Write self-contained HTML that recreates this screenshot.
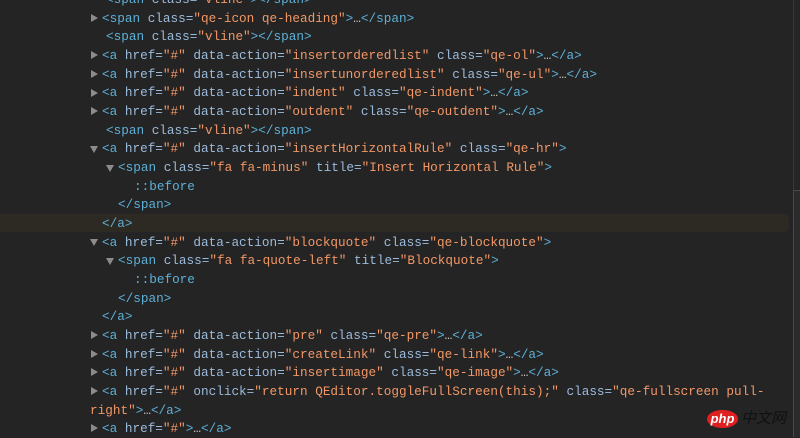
<!DOCTYPE html>
<html><head><meta charset="utf-8">
<style>
html,body{margin:0;padding:0;}
body{width:800px;height:436px;background:#242424;overflow:hidden;position:relative;font-family:"Liberation Mono","DejaVu Sans Mono",monospace;font-size:12.7px;}
.l{position:absolute;height:19px;line-height:19px;white-space:pre;color:#9bbbdc;}
.t{color:#5db0d7}
.v{color:#f29766}
.tri{position:absolute;width:0;height:0;}
.tr{border-top:4.5px solid transparent;border-bottom:4.5px solid transparent;border-left:7px solid #8c8c8c;}
.td{border-left:4.5px solid transparent;border-right:4.5px solid transparent;border-top:7px solid #8c8c8c;}
.hl{position:absolute;left:0;top:214px;width:789px;height:18px;background:#2d2923;border-radius:0 5px 5px 0;}
.sb{position:absolute;left:793px;top:0;width:7px;height:436px;background:#262626;border-left:1px solid #383838;}
.th{position:absolute;left:793px;top:190px;width:6px;height:246px;background:#2b2b2b;border-left:1px solid #4a4a4a;border-top:1px solid #4a4a4a;}
.pe{position:absolute;left:707px;top:410px;width:31px;height:18px;background:#e02020;border-radius:50%;color:#fff;font-family:"Liberation Sans",sans-serif;font-style:italic;font-weight:bold;font-size:13px;line-height:17px;text-align:center;}
.cn{position:absolute;left:741px;top:408px;font-family:"Noto Sans CJK SC",sans-serif;font-size:15px;color:#111;font-style:italic;line-height:20px;white-space:nowrap;}
</style></head><body>
<div class="hl"></div>
<div class="l" style="left:106px;top:-10px"><span class="t">&lt;span</span> class=<span class="v">"vline"</span><span class="t">&gt;&lt;/span&gt;</span></div>

<div class="tri tr" style="left:91px;top:14px"></div>
<div class="l" style="left:102px;top:8.6px"><span class="t">&lt;span</span> class=<span class="v">"qe-icon qe-heading"</span><span class="t">&gt;</span><span style="color:#ccc">…</span><span class="t">&lt;/span&gt;</span></div>
<div class="l" style="left:106px;top:27.3px"><span class="t">&lt;span</span> class=<span class="v">"vline"</span><span class="t">&gt;&lt;/span&gt;</span></div>

<div class="tri tr" style="left:91px;top:51px"></div>
<div class="l" style="left:102px;top:46px"><span class="t">&lt;a</span> href=<span class="v">"#"</span> data-action=<span class="v">"insertorderedlist"</span> class=<span class="v">"qe-ol"</span><span class="t">&gt;</span><span style="color:#ccc">…</span><span class="t">&lt;/a&gt;</span></div>
<div class="tri tr" style="left:91px;top:70px"></div>
<div class="l" style="left:102px;top:64.6px"><span class="t">&lt;a</span> href=<span class="v">"#"</span> data-action=<span class="v">"insertunorderedlist"</span> class=<span class="v">"qe-ul"</span><span class="t">&gt;</span><span style="color:#ccc">…</span><span class="t">&lt;/a&gt;</span></div>
<div class="tri tr" style="left:91px;top:89px"></div>
<div class="l" style="left:102px;top:83.3px"><span class="t">&lt;a</span> href=<span class="v">"#"</span> data-action=<span class="v">"indent"</span> class=<span class="v">"qe-indent"</span><span class="t">&gt;</span><span style="color:#ccc">…</span><span class="t">&lt;/a&gt;</span></div>
<div class="tri tr" style="left:91px;top:107px"></div>
<div class="l" style="left:102px;top:102px"><span class="t">&lt;a</span> href=<span class="v">"#"</span> data-action=<span class="v">"outdent"</span> class=<span class="v">"qe-outdent"</span><span class="t">&gt;</span><span style="color:#ccc">…</span><span class="t">&lt;/a&gt;</span></div>
<div class="l" style="left:106px;top:120.6px"><span class="t">&lt;span</span> class=<span class="v">"vline"</span><span class="t">&gt;&lt;/span&gt;</span></div>

<div class="tri td" style="left:90px;top:146px"></div>
<div class="l" style="left:102px;top:139.3px"><span class="t">&lt;a</span> href=<span class="v">"#"</span> data-action=<span class="v">"insertHorizontalRule"</span> class=<span class="v">"qe-hr"</span><span class="t">&gt;</span></div>
<div class="tri td" style="left:106px;top:165px"></div>
<div class="l" style="left:118px;top:158px"><span class="t">&lt;span</span> class=<span class="v">"fa fa-minus"</span> title=<span class="v">"Insert Horizontal Rule"</span><span class="t">&gt;</span></div>
<div class="l" style="left:134px;top:176.6px"><span class="t">::before</span></div>
<div class="l" style="left:118px;top:195.3px"><span class="t">&lt;/span&gt;</span></div>
<div class="l" style="left:102px;top:214px"><span class="t">&lt;/a&gt;</span></div>

<div class="tri td" style="left:90px;top:239px"></div>
<div class="l" style="left:102px;top:232.6px"><span class="t">&lt;a</span> href=<span class="v">"#"</span> data-action=<span class="v">"blockquote"</span> class=<span class="v">"qe-blockquote"</span><span class="t">&gt;</span></div>
<div class="tri td" style="left:106px;top:258px"></div>
<div class="l" style="left:118px;top:251.3px"><span class="t">&lt;span</span> class=<span class="v">"fa fa-quote-left"</span> title=<span class="v">"Blockquote"</span><span class="t">&gt;</span></div>
<div class="l" style="left:134px;top:270px"><span class="t">::before</span></div>
<div class="l" style="left:118px;top:288.6px"><span class="t">&lt;/span&gt;</span></div>
<div class="l" style="left:102px;top:307.3px"><span class="t">&lt;/a&gt;</span></div>

<div class="tri tr" style="left:91px;top:331px"></div>
<div class="l" style="left:102px;top:326px"><span class="t">&lt;a</span> href=<span class="v">"#"</span> data-action=<span class="v">"pre"</span> class=<span class="v">"qe-pre"</span><span class="t">&gt;</span><span style="color:#ccc">…</span><span class="t">&lt;/a&gt;</span></div>
<div class="tri tr" style="left:91px;top:350px"></div>
<div class="l" style="left:102px;top:344.6px"><span class="t">&lt;a</span> href=<span class="v">"#"</span> data-action=<span class="v">"createLink"</span> class=<span class="v">"qe-link"</span><span class="t">&gt;</span><span style="color:#ccc">…</span><span class="t">&lt;/a&gt;</span></div>
<div class="tri tr" style="left:91px;top:368px"></div>
<div class="l" style="left:102px;top:363.3px"><span class="t">&lt;a</span> href=<span class="v">"#"</span> data-action=<span class="v">"insertimage"</span> class=<span class="v">"qe-image"</span><span class="t">&gt;</span><span style="color:#ccc">…</span><span class="t">&lt;/a&gt;</span></div>
<div class="tri tr" style="left:91px;top:387px"></div>
<div class="l" style="left:102px;top:382px"><span class="t">&lt;a</span> href=<span class="v">"#"</span> onclick=<span class="v">"return QEditor.toggleFullScreen(this);"</span> class=<span class="v">"qe-fullscreen pull-</span></div>
<div class="l" style="left:90px;top:400.6px"><span class="v">right"</span><span class="t">&gt;</span><span style="color:#ccc">…</span><span class="t">&lt;/a&gt;</span></div>
<div class="tri tr" style="left:91px;top:424px"></div>
<div class="l" style="left:102px;top:419.3px"><span class="t">&lt;a</span> href=<span class="v">"#"</span><span class="t">&gt;</span><span style="color:#ccc">…</span><span class="t">&lt;/a&gt;</span></div>

<div class="sb"></div>
<div class="th"></div>
<div class="pe">php</div><div class="cn">中文网</div>
</body></html>
